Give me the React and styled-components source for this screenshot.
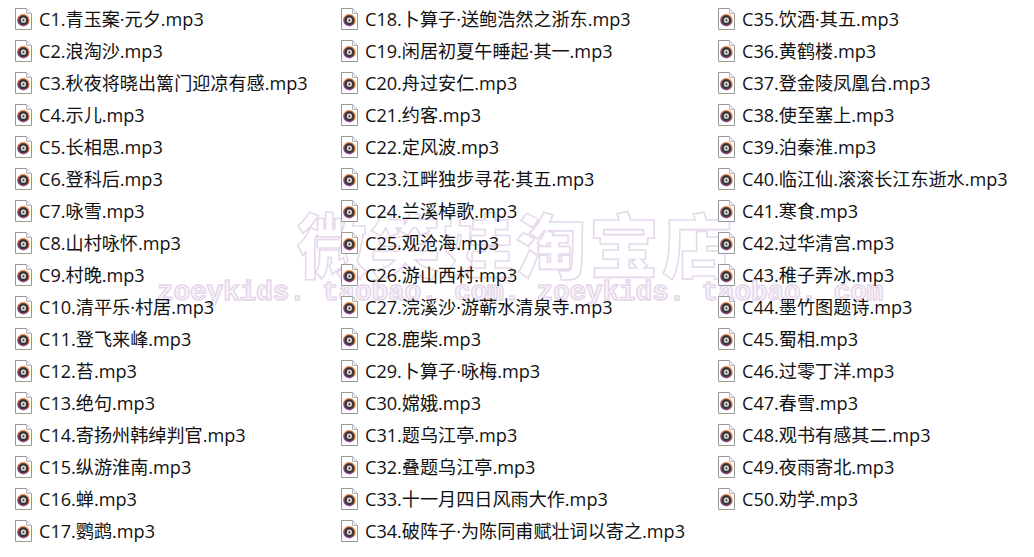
import React from 'react';
import styled, { createGlobalStyle } from 'styled-components';

const GlobalStyle = createGlobalStyle`
  html, body {
    margin: 0;
    padding: 0;
    background: #fff;
  }
`;

const Page = styled.div`
  position: relative;
  width: 1034px;
  height: 557px;
  overflow: hidden;
  background: #fff;
  font-family: "Open Sans", "Noto Sans CJK SC", sans-serif;
`;

const FileGrid = styled.div`
  position: relative;
  display: grid;
  grid-template-columns: 326px 377px 1fr;
  grid-template-rows: repeat(17, 32px);
  grid-auto-flow: column;
  padding: 3px 0 0 15px;
`;

const FileRow = styled.div`
  display: flex;
  align-items: center;
  gap: 7px;
  white-space: nowrap;
`;

const FileName = styled.span`
  font-size: 18.13px;
  line-height: 32px;
  color: #111;
`;

const Watermark = styled.div`
  position: absolute;
  left: 0;
  top: 0;
  width: 100%;
  height: 100%;
  pointer-events: none;
`;

const MarkTitle = styled.div`
  position: absolute;
  left: 297px;
  top: 197px;
  font-family: "Noto Sans CJK SC", sans-serif;
  font-weight: 900;
  font-size: 70px;
  line-height: 92px;
  letter-spacing: 3px;
  white-space: nowrap;
  color: #fff;
  -webkit-text-stroke: 1.6px #e6d9ec;
`;

const MarkUrl = styled.div`
  position: absolute;
  left: 157px;
  top: 279px;
  font-family: "Liberation Mono", monospace;
  font-weight: 700;
  font-size: 28px;
  line-height: 28px;
  letter-spacing: -0.3px;
  white-space: pre;
  color: #f8f3f9;
  -webkit-text-stroke: 1.4px #e5d6ea;
`;

const names = [
  'C1.青玉案·元夕', 'C2.浪淘沙', 'C3.秋夜将晓出篱门迎凉有感', 'C4.示儿', 'C5.长相思',
  'C6.登科后', 'C7.咏雪', 'C8.山村咏怀', 'C9.村晚', 'C10.清平乐·村居',
  'C11.登飞来峰', 'C12.苔', 'C13.绝句', 'C14.寄扬州韩绰判官', 'C15.纵游淮南',
  'C16.蝉', 'C17.鹦鹉', 'C18.卜算子·送鲍浩然之浙东', 'C19.闲居初夏午睡起·其一', 'C20.舟过安仁',
  'C21.约客', 'C22.定风波', 'C23.江畔独步寻花·其五', 'C24.兰溪棹歌', 'C25.观沧海',
  'C26.游山西村', 'C27.浣溪沙·游蕲水清泉寺', 'C28.鹿柴', 'C29.卜算子·咏梅', 'C30.嫦娥',
  'C31.题乌江亭', 'C32.叠题乌江亭', 'C33.十一月四日风雨大作', 'C34.破阵子·为陈同甫赋壮词以寄之', 'C35.饮酒·其五',
  'C36.黄鹤楼', 'C37.登金陵凤凰台', 'C38.使至塞上', 'C39.泊秦淮', 'C40.临江仙.滚滚长江东逝水',
  'C41.寒食', 'C42.过华清宫', 'C43.稚子弄冰', 'C44.墨竹图题诗', 'C45.蜀相',
  'C46.过零丁洋', 'C47.春雪', 'C48.观书有感其二', 'C49.夜雨寄北', 'C50.劝学',
];

function AudioFileIcon() {
  return (
    <svg width="17" height="22" viewBox="0 0 17 22" style={{ flex: 'none' }}>
      <defs>
        <linearGradient id="discRim" x1="0.8" y1="0.1" x2="0.2" y2="0.9">
          <stop offset="0" stopColor="#f0913a" />
          <stop offset="0.5" stopColor="#c8553a" />
          <stop offset="1" stopColor="#7c4aa8" />
        </linearGradient>
      </defs>
      <path d="M0.5 0.5H11.5L16.5 5.5V21.5H0.5Z" fill="#fff" stroke="#979797" />
      <path d="M11.5 0.5V5.5H16.5" fill="#efefef" stroke="#b5b5b5" />
      <circle cx="8.4" cy="12.2" r="6.2" fill="url(#discRim)" />
      <circle cx="8.4" cy="12.2" r="4.9" fill="#37343a" />
      <circle cx="8.4" cy="12.2" r="2.6" fill="#d8d8d8" />
      <circle cx="8.4" cy="12.2" r="1" fill="#3a3a3a" />
    </svg>
  );
}

export default function App() {
  return (
    <Page>
      <GlobalStyle />
      <Watermark>
        <MarkTitle>微笑娃淘宝店</MarkTitle>
        <MarkUrl>zoeykids. taobao. com. zoeykids. taobao. com</MarkUrl>
      </Watermark>
      <FileGrid>
        {names.map((name) => (
          <FileRow key={name}>
            <AudioFileIcon />
            <FileName>{`${name}.mp3`}</FileName>
          </FileRow>
        ))}
      </FileGrid>
    </Page>
  );
}
